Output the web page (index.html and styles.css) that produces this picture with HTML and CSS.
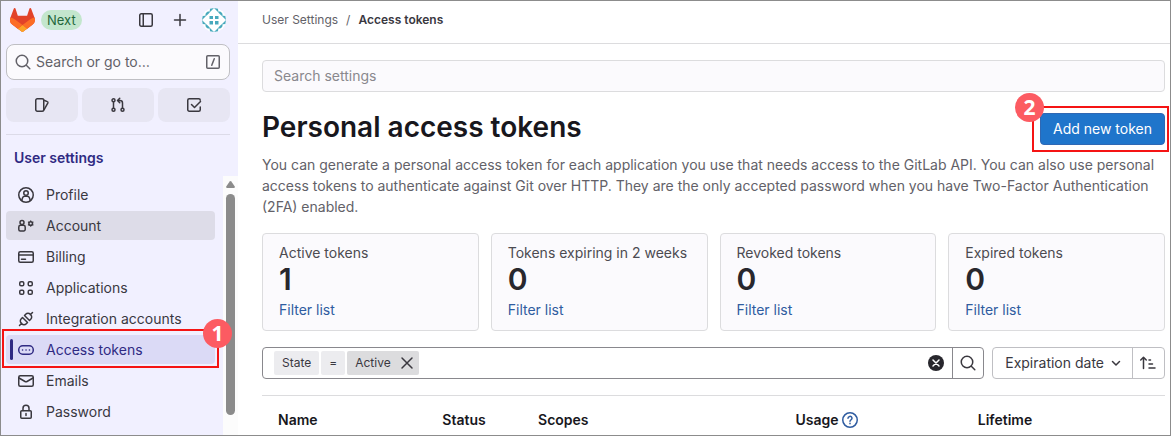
FILE: index.html
```html
<!DOCTYPE html>
<html lang="en">
<head>
<meta charset="utf-8">
<title>Personal access tokens</title>
<link rel="stylesheet" href="styles.css">
</head>
<body>
<div class="shell">
  <aside class="sidebar">
    <div class="topbar">
      <a class="brand" href="#" aria-label="Home">
        <svg width="25" height="24" viewBox="0 0 25 24"><path fill="#E24329" d="m24.5 9.5-.03-.09L21.08.56a.9.9 0 0 0-1.7.09l-2.29 7.01H7.83L5.54.65A.9.9 0 0 0 3.84.56L.45 9.4l-.03.09a6.3 6.3 0 0 0 2.09 7.28l.01.01.03.02 5.16 3.87 2.56 1.93 1.55 1.18a1.05 1.05 0 0 0 1.27 0l1.55-1.18 2.56-1.93 5.2-3.89h.01a6.3 6.3 0 0 0 2.09-7.28Z"/><path fill="#FC6D26" d="m24.5 9.5-.03-.09a11.44 11.44 0 0 0-4.56 2.05l-7.44 5.63 4.74 3.58 5.2-3.89h.01A6.3 6.3 0 0 0 24.5 9.5Z"/><path fill="#FCA326" d="m7.7 20.67 2.57 1.93 1.55 1.18a1.05 1.05 0 0 0 1.27 0l1.55-1.18 2.56-1.93-4.74-3.58-4.76 3.58Z"/><path fill="#FC6D26" d="M5.01 11.46A11.43 11.43 0 0 0 .45 9.41l-.03.09a6.3 6.3 0 0 0 2.09 7.28l.01.01.03.02 5.16 3.87 4.75-3.58-7.45-5.64Z"/></svg>
      </a>
      <span class="next">Next</span>
      <span class="spacer"></span>
      <button class="plain" aria-label="Collapse sidebar"><svg class="ic" viewBox="0 0 16 16"><rect x="1.75" y="1.75" width="12.5" height="12.5" rx="1.5"/><path d="M5.25 2v12"/></svg></button>
      <button class="plain" aria-label="Create new"><svg class="ic" viewBox="0 0 16 16"><path d="M8 2.5v11M2.5 8h11"/></svg></button>
      <button class="plain" aria-label="User menu">
        <svg width="24" height="24" viewBox="0 0 24 24"><circle cx="12" cy="12" r="12" fill="#fff"/><g fill="#48a9bd"><path d="M7.500 8h3.500v3H7.500zM13 8h3.500v3H13zM7.500 13h3.500v3.500H7.500zM13 13h3.500v3.500H13z"/><path d="M8 .7 12 0 7.500 4.500zM16 .7 12 0l4.500 4.500zM8 23.300l4 .7-4.500-4.500zM16 23.300l-4 .7 4.500-4.500zM.7 8 0 12l4.500-4.500zM23.300 8l.7 4-4.500-4.500zM.7 16 0 12l4.500 4.500zM23.300 16l.7-4-4.500 4.500zM3.500 3.500h4v1.200L4.700 7.500H3.500zM20.500 3.500h-4v1.200l2.800 2.800h1.200zM3.500 20.500h4v-1.200l-2.800-2.800H3.500zM20.500 20.500h-4v-1.200l2.800-2.800h1.200z"/></g><path fill="#fff" d="M3 3h3L3 6zM21 3h-3l3 3zM3 21h3l-3-3zM21 21h-3l3-3z"/></svg>
      </button>
    </div>
    <button class="goto">
      <svg class="ic" viewBox="0 0 16 16"><circle cx="7" cy="7" r="5.750"/><path d="m11.300 11.300 3.500 3.500"/></svg>
      <span>Search or go to…</span>
      <svg class="ic" viewBox="0 0 16 16"><rect x="1.750" y="1.750" width="12.500" height="12.500" rx="1"/><path d="m9.250 4.750-2.500 6.500"/></svg>
    </button>
    <div class="shortcuts">
      <a href="#" aria-label="Issues"><svg class="ic" viewBox="0 0 16 16"><rect x="1.750" y="1.750" width="8" height="12.500" rx="1.500"/><path d="m10 3.200 3.300 1.400a1 1 0 0 1 .6 1.200L10 12.800"/></svg></a>
      <a href="#" aria-label="Merge requests"><svg class="ic" viewBox="0 0 16 16"><circle cx="3.500" cy="3.250" r="1.500"/><circle cx="3.500" cy="12.750" r="1.500"/><circle cx="12.500" cy="12.750" r="1.500"/><path d="M3.500 4.750v6.500M12.500 11.250V6a2.500 2.500 0 0 0-2.500-2.500H8M9.750 1.250 7.500 3.500l2.250 2.250"/></svg></a>
      <a href="#" aria-label="To-do items"><svg class="ic" viewBox="0 0 16 16"><path d="M14.250 10v2.750a1.500 1.500 0 0 1-1.500 1.500h-9.500a1.500 1.500 0 0 1-1.500-1.500v-9.500a1.500 1.500 0 0 1 1.500-1.500h9.500a1.500 1.500 0 0 1 1.500 1.500M5.500 7.500 8.500 10.500l6-6"/></svg></a>
    </div>
    <h2 class="side-title">User settings</h2>
    <div class="scroll">
      <nav class="nav">
        <a href="#"><svg class="ic" viewBox="0 0 16 16"><circle cx="8" cy="8" r="7.250"/><circle cx="8" cy="6" r="2.250"/><path d="M3.700 13.500 4.500 11a2.500 2.500 0 0 1 2.300-1.700h2.400a2.500 2.500 0 0 1 2.300 1.700l.8 2.500"/></svg>Profile</a>
        <a href="#" class="hover"><svg class="ic" viewBox="0 0 16 16"><circle cx="4" cy="4.500" r="2"/><path d="M2.600 7.250h2.800A1.800 1.800 0 0 1 7.200 9v2.500a1.500 1.500 0 0 1-1.500 1.500H2.300a1.500 1.500 0 0 1-1.500-1.500V9a1.800 1.800 0 0 1 1.800-1.750Z"/><circle cx="12.700" cy="5.500" r="1.800"/><path stroke-width="1.200" d="M12.700 2.800v.6M12.700 7.600v.6M10.400 4.100l.5.300M14.500 6.600l.5.300M10.400 6.900l.5-.3M14.500 4.400l.5-.3"/></svg>Account</a>
        <a href="#"><svg class="ic" viewBox="0 0 16 16"><rect x=".75" y="2.750" width="14.500" height="10.500" rx="1.500"/><path d="M1 6h14M3.500 10.250h4"/></svg>Billing</a>
        <a href="#"><svg class="ic" viewBox="0 0 16 16"><rect x="1.750" y="1.750" width="4" height="4" rx="1.300"/><rect x="10.250" y="1.750" width="4" height="4" rx="1.300"/><rect x="1.750" y="10.250" width="4" height="4" rx="1.300"/><rect x="10.250" y="10.250" width="4" height="4" rx="1.300"/></svg>Applications</a>
        <a href="#"><svg class="ic" viewBox="0 0 16 16"><path d="m1.500 14.500 2.200-2.200M12.300 3.700l2.200-2.200M4.500 6.500l5 5M6.500 4.500l5 5M6.500 4.500l1.200-1.200a3.200 3.200 0 0 1 4.600 0l.4.400a3.200 3.200 0 0 1 0 4.600L11.500 9.500M4.500 6.500 3.300 7.700a3.200 3.200 0 0 0 0 4.600l.4.400a3.200 3.200 0 0 0 4.600 0l1.200-1.200"/></svg>Integration accounts</a>
        <a href="#" class="active" aria-current="page"><svg class="ic" viewBox="0 0 16 16"><rect x=".75" y="3.750" width="14.500" height="8.500" rx="4"/><path d="M4.500 8h.1M8 8h.1M11.400 8h.1"/></svg>Access tokens<span class="mark mark-nav"></span><span class="step step-nav">1</span></a>
        <a href="#"><svg class="ic" viewBox="0 0 16 16"><rect x=".75" y="2.750" width="14.500" height="10.500" rx="1.500"/><path d="m1 5 6 3.500a2 2 0 0 0 2 0L15 5"/></svg>Emails</a>
        <a href="#"><svg class="ic" viewBox="0 0 16 16"><rect x="2.750" y="6.750" width="10.500" height="7.500" rx="1"/><path d="M5 6.500V4.300a3 3 0 0 1 6 0v2.200M8 9.500v2"/></svg>Password</a>
      </nav>
      <div class="track">
        <svg width="9" height="7" viewBox="0 0 9 7"><path fill="#8b8b8b" d="M3.700.5Q4.500-.4 5.300.5L8.800 5.500Q9 7 8 7H1Q0 7 .2 5.500Z"/></svg>
        <div class="thumb"></div>
      </div>
    </div>
  </aside>
  <div class="page">
    <nav class="crumbs" aria-label="Breadcrumb"><a href="#">User Settings</a><span>/</span><a href="#" class="current">Access tokens</a></nav>
    <main class="content">
      <input class="search" type="search" placeholder="Search settings" aria-label="Search settings">
      <div class="heading">
        <h1>Personal access tokens</h1>
        <div class="callout"><button class="primary">Add new token</button><span class="mark mark-add"></span><span class="step step-add">2</span></div>
      </div>
      <p class="intro">You can generate a personal access token for each application you use that needs access to the GitLab API. You can also use personal access tokens to authenticate against Git over HTTP. They are the only accepted password when you have Two-Factor Authentication (2FA) enabled.</p>
      <div class="cards">
        <section class="card"><h3>Active tokens</h3><strong>1</strong><a href="#">Filter list</a></section>
        <section class="card"><h3>Tokens expiring in 2 weeks</h3><strong>0</strong><a href="#">Filter list</a></section>
        <section class="card"><h3>Revoked tokens</h3><strong>0</strong><a href="#">Filter list</a></section>
        <section class="card"><h3>Expired tokens</h3><strong>0</strong><a href="#">Filter list</a></section>
      </div>
      <div class="filters">
        <div class="filter-box">
          <span class="token">State</span><span class="token op">=</span><span class="token value">Active<button class="plain" aria-label="Remove"><svg class="ic" viewBox="0 0 16 16"><path d="m3 3 10 10M13 3 3 13"/></svg></button></span>
          <input class="filter-text" type="text" aria-label="Filter tokens">
          <button class="plain clear" aria-label="Clear"><svg width="16" height="16" viewBox="0 0 16 16"><circle cx="8" cy="8" r="8" fill="#28272d"/><path d="m5 5 6 6M11 5l-6 6" stroke="#fff" stroke-width="1.500" stroke-linecap="round"/></svg></button>
          <button class="plain go" aria-label="Search"><svg class="ic" viewBox="0 0 16 16"><circle cx="7" cy="7" r="5.750"/><path d="m11.300 11.300 3.500 3.500"/></svg></button>
        </div>
        <div class="sort">
          <button class="plain sort-by">Expiration date<svg class="ic" viewBox="0 0 16 16"><path d="m4.500 6.500 3.500 3.500 3.500-3.500"/></svg></button>
          <button class="plain direction" aria-label="Sort direction"><svg class="ic" viewBox="0 0 16 16"><path d="M3.500 13.500v-11M.75 5 3.500 2.250 6.250 5M9 5h1.500M9 9h3.500M9 13h6"/></svg></button>
        </div>
      </div>
      <table class="tokens">
        <colgroup><col class="c-name"><col class="c-status"><col class="c-scopes"><col class="c-usage"><col></colgroup>
        <thead><tr><th>Name</th><th>Status</th><th>Scopes</th><th><span class="usage">Usage<a href="#" aria-label="Usage help"><svg class="ic" viewBox="0 0 16 16"><circle cx="8" cy="8" r="7.250"/><path d="M6 6.300a2 1.900 0 1 1 3 1.600c-.7.400-1 .700-1 1.400M8 11.200v.600"/></svg></a></span></th><th>Lifetime</th></tr></thead>
      </table>
    </main>
  </div>
</div>
</body>
</html>
```
FILE: styles.css
```css
* { box-sizing: border-box; }
body { margin: 0; font: 14px/20px Inter, "Liberation Sans", sans-serif; color: #3a383f; background: #fff; }
a { color: inherit; text-decoration: none; }
button, input { font: inherit; color: inherit; }
h1, h2, h3, p { margin: 0; }
svg { display: block; flex: none; }
.ic { width: 16px; height: 16px; fill: none; stroke: currentColor; stroke-width: 1.5; stroke-linecap: round; stroke-linejoin: round; }
.plain { display: flex; align-items: center; border: 0; padding: 0; background: none; }
.shell { display: flex; height: 100vh; overflow: hidden; border: 1px solid #8c8c8c; }

.sidebar { flex: none; width: 237px; display: flex; flex-direction: column; background: #f1f0ff; }
.topbar { display: flex; align-items: center; height: 38px; padding: 0 12px 0 9px; }
.topbar .plain + .plain { margin-left: 18px; }
.topbar .plain:last-child { margin-left: 14px; }
.next { margin-left: 6px; padding: 0 6px; border-radius: 10px; background: #c3e6cd; color: #24663b; font-size: 13px; }
.spacer { flex: 1; }
.goto { display: flex; align-items: center; gap: 5px; height: 36px; margin: 5px 8px 0 5px; padding: 0 8px; border: 1px solid #bfbfc3; border-radius: 8px; background: #fbfafd; color: #626168; text-align: left; }
.goto span { flex: 1; }
.shortcuts { display: flex; gap: 4px; margin: 8px 8px 0 5px; padding-bottom: 12px; border-bottom: 1px solid #dcdbe8; }
.shortcuts a { flex: 1; display: flex; align-items: center; justify-content: center; height: 34px; border-radius: 8px; background: #e7e6f3; }
.side-title { margin: 13px 13px 8px; font-size: 14px; line-height: 20px; font-weight: 600; color: #2f2a83; }
.scroll { flex: 1; display: flex; min-height: 0; }
.nav { flex: 1; display: flex; flex-direction: column; gap: 2px; padding: 4px 8px 0 5px; }
.nav a { position: relative; flex: none; display: flex; align-items: center; gap: 12px; height: 29px; padding-left: 12px; border-radius: 4px; }
.nav .hover { background: #dddce8; }
.nav .active { background: #dbdaf6; color: #2f2a83; }
.nav .active::before { content: ""; position: absolute; left: 4px; top: 4px; bottom: 4px; width: 3px; border-radius: 2px; background: #2f2a83; }
.track { width: 15px; display: flex; flex-direction: column; align-items: center; gap: 6px; padding-top: 5px; background: #fcfcfc; }
.thumb { width: 9px; height: 221px; border-radius: 5px; background: #8b8b8b; }

.mark { position: absolute; border: 2px solid #f51414; pointer-events: none; }
.mark-nav { inset: -6px -4px -4px -4px; }
.mark-add { inset: -7px -4px -7px -8px; }
.step { position: absolute; display: flex; align-items: center; justify-content: center; width: 29px; height: 29px; border-radius: 50%; background: #fc5b62; color: #fff; font: 700 21px/29px "Open Sans", sans-serif; }
.step-nav { right: -17px; top: -16px; }
.step-add { left: -25px; top: -20px; }

.page { flex: 1; min-width: 0; }
.crumbs { display: flex; align-items: center; gap: 8px; height: 43px; padding: 0 24px 4px; border-bottom: 1px solid #dcdcde; font-size: 12px; color: #626168; }
.crumbs .current { font-weight: 600; color: #3a383f; }
.content { padding: 16px 5px 0 24px; }
.search { display: block; width: 100%; height: 32px; padding: 0 11px 2px; border: 1px solid #dcdcde; border-radius: 4px; background: #fbfafd; }
.search::placeholder { color: #89888d; opacity: 1; }
.heading { display: flex; align-items: center; justify-content: space-between; margin-top: 19px; height: 36px; }
h1 { padding-bottom: 4px; font-size: 28px; line-height: 32px; font-weight: 600; color: #18171d; }
.callout { position: relative; }
.primary { display: block; height: 32px; padding: 0 12px; border: 1px solid #2f68b4; border-radius: 4px; background: #1f75cb; color: #fff; }
.intro { margin-top: 7px; line-height: 21px; color: #626168; }
.cards { display: grid; grid-template-columns: repeat(4, 1fr); gap: 12px; margin-top: 16px; }
.card { display: flex; flex-direction: column; align-items: flex-start; height: 98px; padding: 9px 16px; border: 1px solid #dcdcde; border-radius: 4px; background: #fbfafd; }
.card h3 { font-size: 14px; line-height: 20px; font-weight: 400; color: #4c4b51; }
.card strong { margin-bottom: 5px; font-size: 30px; line-height: 32px; font-weight: 600; color: #28272d; }
.card a { color: #2f5ca0; }
.filters { display: flex; gap: 8px; margin-top: 16px; }
.filter-box { flex: 1; display: flex; align-items: center; gap: 2px; height: 32px; padding-left: 11px; border: 1px solid #89888d; border-radius: 4px; }
.token { display: flex; align-items: center; gap: 8px; height: 24px; padding: 0 8px; border-radius: 2px; background: #ececef; font-size: 12px; }
.token.value { background: #dcdcde; padding-right: 4px; }
.filter-text { flex: 1; min-width: 0; border: 0; outline: 0; background: none; }
.clear { margin-right: 6px; }
.go { height: 30px; padding: 0 7px; border-left: 1px solid #89888d; }
.sort { display: flex; border: 1px solid #bfbfc3; border-radius: 4px; }
.sort-by { gap: 4px; padding: 0 8px 0 12px; }
.direction { padding: 0 8px 0 7px; border-left: 1px solid #bfbfc3; }
.tokens { width: 100%; margin-top: 16px; border-collapse: collapse; table-layout: fixed; border-top: 1px solid #dcdcde; }
.tokens th { padding: 14px 16px; text-align: left; font-weight: 600; color: #18171d; }
.c-name { width: 18.2%; }
.c-status { width: 10.6%; }
.c-scopes { width: 28.5%; }
.c-usage { width: 20.2%; }
.usage { display: flex; align-items: center; gap: 4px; }
.usage a { color: #2f5ca0; }
```
